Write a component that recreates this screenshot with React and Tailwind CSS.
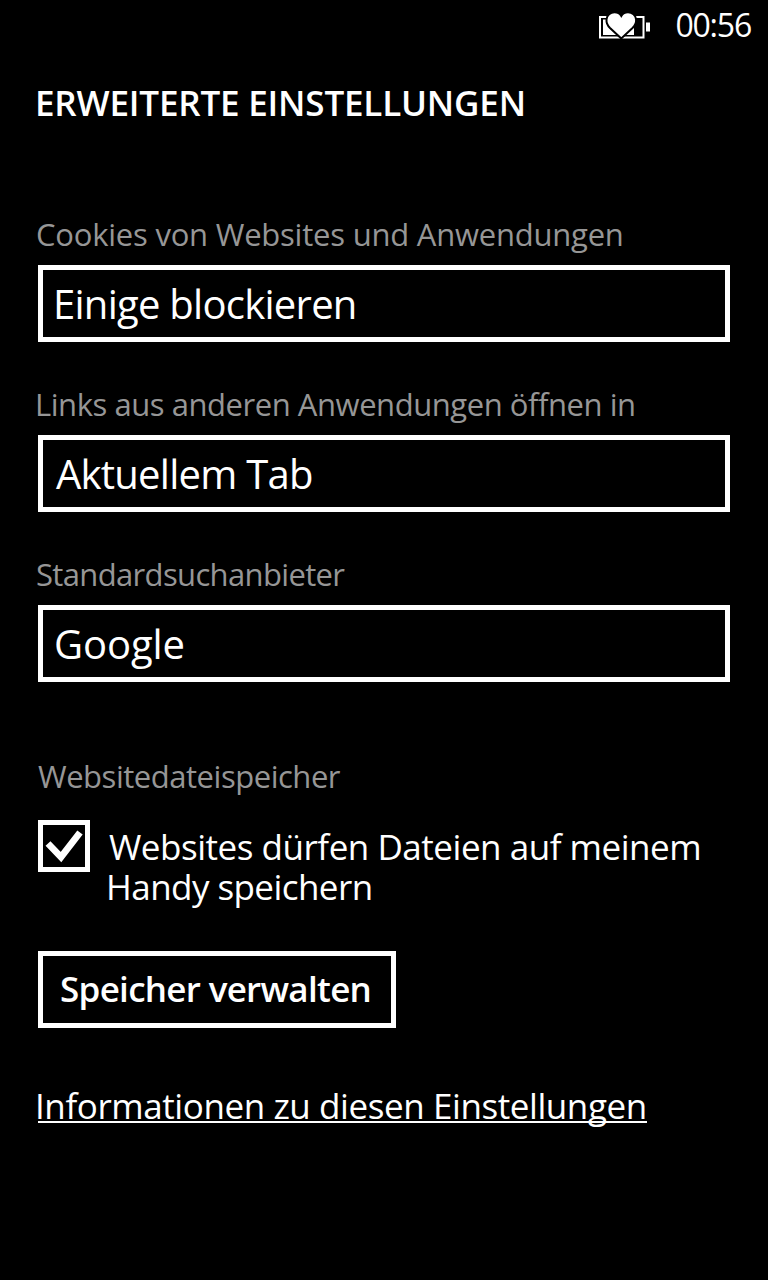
import React from "react";

const BatterySaverIcon = () => (
  <svg width="52" height="30" viewBox="0 0 52 30" className="mt-[3px] shrink-0">
    <path d="M1 6H44.500V26.500H1Z" fill="none" stroke="white" strokeWidth="2" />
    <path d="M4 8.500H35V24H4Z" fill="white" />
    <path d="M47 11.500H51V20.500H47Z" fill="white" />
    <path
      d="M22.300 27.500L11 17C8 14 7.300 11 7.500 8.500C7.800 4 11.500 1.300 15.500 1.300C18.500 1.300 21 2.800 22.300 5C23.600 2.800 26 1.300 29 1.300C33 1.300 36.800 4 37.100 8.500C37.300 11 36.500 14 33.500 17Z"
      fill="white"
      stroke="black"
      strokeWidth="2"
    />
  </svg>
);

const CheckIcon = () => (
  <svg width="42" height="42" viewBox="0 0 42 42">
    <path d="M5 18.500L18 32L37 7.500" fill="none" stroke="white" strokeWidth="6.800" />
  </svg>
);

const StatusBar = () => (
  <div className="flex h-12 items-center justify-end pr-[17px]">
    <BatterySaverIcon />
    <span className="ml-6 pt-px text-[32px] leading-none tracking-[-1.2px]">00:56</span>
  </div>
);

const Label = ({ className, children }) => (
  <div className={`text-[31px] leading-10 whitespace-nowrap text-[#969696] ${className}`}>{children}</div>
);

const Picker = ({ className, children }) => (
  <button
    className={`mt-[11px] flex h-[77px] w-full items-center border-[5px] border-white text-left text-[40px] leading-none whitespace-nowrap ${className}`}
  >
    {children}
  </button>
);

const App = () => {
  return (
    <div className="min-h-screen bg-black font-['Open_Sans',sans-serif] text-white">
      <StatusBar />

      <main className="flex flex-col items-start px-[38px] pt-[35px]">
        <h1 className="-ml-[3px] text-[35px] leading-10 font-semibold tracking-[-0.18px] whitespace-nowrap">
          ERWEITERTE EINSTELLUNGEN
        </h1>

        {/* Cookies, Links, Suche */}
        <Label className="mt-[91px] -ml-[2px] tracking-[-0.22px]">Cookies von Websites und Anwendungen</Label>
        <Picker className="pl-[10px] tracking-[-0.74px]">Einige blockieren</Picker>

        <Label className="mt-[42px] -ml-[3px] tracking-[-0.45px]">Links aus anderen Anwendungen öffnen in</Label>
        <Picker className="pl-[13px] tracking-[-0.75px]">Aktuellem Tab</Picker>

        <Label className="mt-[42px] -ml-[2px] tracking-[-0.65px]">Standardsuchanbieter</Label>
        <Picker className="pl-[11px] tracking-[-0.1px]">Google</Picker>

        {/* Websitedateispeicher */}
        <Label className="mt-[74px] tracking-[-0.47px]">Websitedateispeicher</Label>
        <div className="mt-6 flex items-start">
          <div className="size-[52px] shrink-0 border-[5px] border-white">
            <CheckIcon />
          </div>
          <div className="mt-[7px] ml-4 text-[35px] leading-10 whitespace-nowrap">
            <div className="pl-[3px] tracking-[-0.47px]">Websites dürfen Dateien auf meinem</div>
            <div className="tracking-[-0.56px]">Handy speichern</div>
          </div>
        </div>

        <button className="mt-[44px] flex h-[77px] w-[358px] items-center border-[5px] border-white pb-0.5 pl-[17px] text-[35px] leading-none font-semibold tracking-[-0.7px] whitespace-nowrap">
          Speicher verwalten
        </button>

        <a
          href="#"
          className="mt-[58px] h-[37px] w-[609px] border-b-2 border-white -indent-[3px] text-[35px] leading-10 tracking-[-0.42px] whitespace-nowrap"
        >
          Informationen zu diesen Einstellungen
        </a>
      </main>
    </div>
  );
};

export default App;
